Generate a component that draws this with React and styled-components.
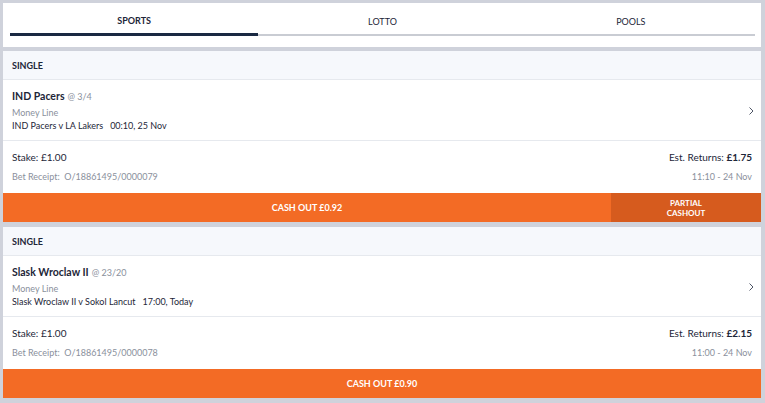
import React from "react";
import styled, { createGlobalStyle } from "styled-components";

const Global = createGlobalStyle`
  html, body { margin: 0; padding: 0; background: #cfd2db; }
  body { font-family: Lato, "Open Sans", sans-serif; color: #1d2638; }
  * { box-sizing: border-box; }
`;

const Page = styled.div`
  padding: 3px 4px 5px 3px;
  display: flex;
  flex-direction: column;
  gap: 4px;
`;

const TabsPanel = styled.div`
  background: #fff;
  height: 44px;
  padding: 0 6px 0 7px;
  display: flex;
`;

const Tab = styled.div`
  flex: 1;
  display: flex;
  align-items: center;
  justify-content: center;
  font-size: 9px;
  font-weight: ${(p) => (p.$active ? 700 : 400)};
  color: #1d2638;
  height: 33px;
  border-bottom: ${(p) => (p.$active ? "3px solid #1a2942" : "2px solid #c9ccd3")};
  margin-bottom: ${(p) => (p.$active ? "8px" : "9px")};
  padding-top: ${(p) => (p.$active ? "4px" : "6px")};
`;

const List = styled.div`
  display: flex;
  flex-direction: column;
  gap: 5px;
`;

const Card = styled.div`
  background: #fff;
  display: flex;
  flex-direction: column;
`;

const CardHeader = styled.div`
  height: 29px;
  background: #f6f8fc;
  border-bottom: 1px solid #e6e9ee;
  display: flex;
  align-items: center;
  padding-left: 9px;
  font-size: 9px;
  font-weight: 700;
  color: #1d2638;
`;

const Selection = styled.div`
  height: 61px;
  border-bottom: 1px solid #e6e9ee;
  display: flex;
  align-items: center;
  justify-content: space-between;
  padding: 0 6px 0 9px;
`;

const SelInfo = styled.div`
  display: flex;
  flex-direction: column;
`;

const SelName = styled.div`
  font-size: 10.5px;
  font-weight: 700;
  color: #1d2638;
  line-height: 13px;
  margin-top: 2px;
  margin-bottom: 3px;
`;

const Odds = styled.span`
  font-size: 9px;
  font-weight: 400;
  color: #8a909c;
  margin-left: 3px;
`;

const Market = styled.div`
  font-size: 9px;
  color: #8a909c;
  line-height: 13px;
`;

const Event = styled.div`
  font-size: 9px;
  color: #1d2638;
  line-height: 13px;
  white-space: pre;
`;

const Chevron = styled.svg`
  width: 8px;
  height: 10px;
  margin-top: 1px;
`;

const Details = styled.div`
  height: 52px;
  display: grid;
  grid-template-columns: 1fr auto;
  align-content: center;
  row-gap: 8px;
  padding: 0 9px 2px 9px;
`;

const Stake = styled.div`
  font-size: 10px;
  color: #1d2638;
`;

const Returns = styled.div`
  font-size: 10px;
  color: #1d2638;
  text-align: right;
  b { font-weight: 700; }
`;

const Meta = styled.div`
  font-size: 9px;
  color: #8a909c;
  text-align: ${(p) => (p.$right ? "right" : "left")};
  white-space: pre;
`;

const CashBar = styled.div`
  height: 29px;
  display: flex;
  background: #f36b25;
`;

const CashOut = styled.div`
  flex: 1;
  display: flex;
  align-items: center;
  justify-content: center;
  color: #fff;
  font-size: 9px;
  font-weight: 700;
`;

const Partial = styled.div`
  width: 150px;
  background: #d65b1e;
  color: #fff;
  font-size: 8px;
  font-weight: 700;
  display: flex;
  flex-direction: column;
  align-items: center;
  justify-content: center;
  line-height: 10px;
  text-align: center;
`;

const bets = [
  {
    name: "IND Pacers",
    odds: "@ 3/4",
    event: "IND Pacers v LA Lakers   00:10, 25 Nov",
    stake: "£1.00",
    returns: "£1.75",
    receipt: "O/18861495/0000079",
    time: "11:10 - 24 Nov",
    cash: "£0.92",
    partial: true,
  },
  {
    name: "Slask Wroclaw II",
    odds: "@ 23/20",
    event: "Slask Wroclaw II v Sokol Lancut   17:00, Today",
    stake: "£1.00",
    returns: "£2.15",
    receipt: "O/18861495/0000078",
    time: "11:00 - 24 Nov",
    cash: "£0.90",
    partial: false,
  },
];

export default function App() {
  return (
    <>
      <Global />
      <Page>
        <TabsPanel>
          <Tab $active>SPORTS</Tab>
          <Tab>LOTTO</Tab>
          <Tab>POOLS</Tab>
        </TabsPanel>
        <List>
          {bets.map((b) => (
            <Card key={b.receipt}>
              <CardHeader>SINGLE</CardHeader>
              <Selection>
                <SelInfo>
                  <SelName>
                    {b.name}
                    <Odds>{b.odds}</Odds>
                  </SelName>
                  <Market>Money Line</Market>
                  <Event>{b.event}</Event>
                </SelInfo>
                <Chevron viewBox="0 0 8 10">
                  <path d="M2.5 1.5 L6 5 L2.5 8.5" fill="none" stroke="#3a4255" strokeWidth="0.9" />
                </Chevron>
              </Selection>
              <Details>
                <Stake>Stake: {b.stake}</Stake>
                <Returns>
                  Est. Returns: <b>{b.returns}</b>
                </Returns>
                <Meta>{"Bet Receipt:  " + b.receipt}</Meta>
                <Meta $right>{b.time}</Meta>
              </Details>
              <CashBar>
                <CashOut>CASH OUT {b.cash}</CashOut>
                {b.partial && (
                  <Partial>
                    <span>PARTIAL</span>
                    <span>CASHOUT</span>
                  </Partial>
                )}
              </CashBar>
            </Card>
          ))}
        </List>
      </Page>
    </>
  );
}
